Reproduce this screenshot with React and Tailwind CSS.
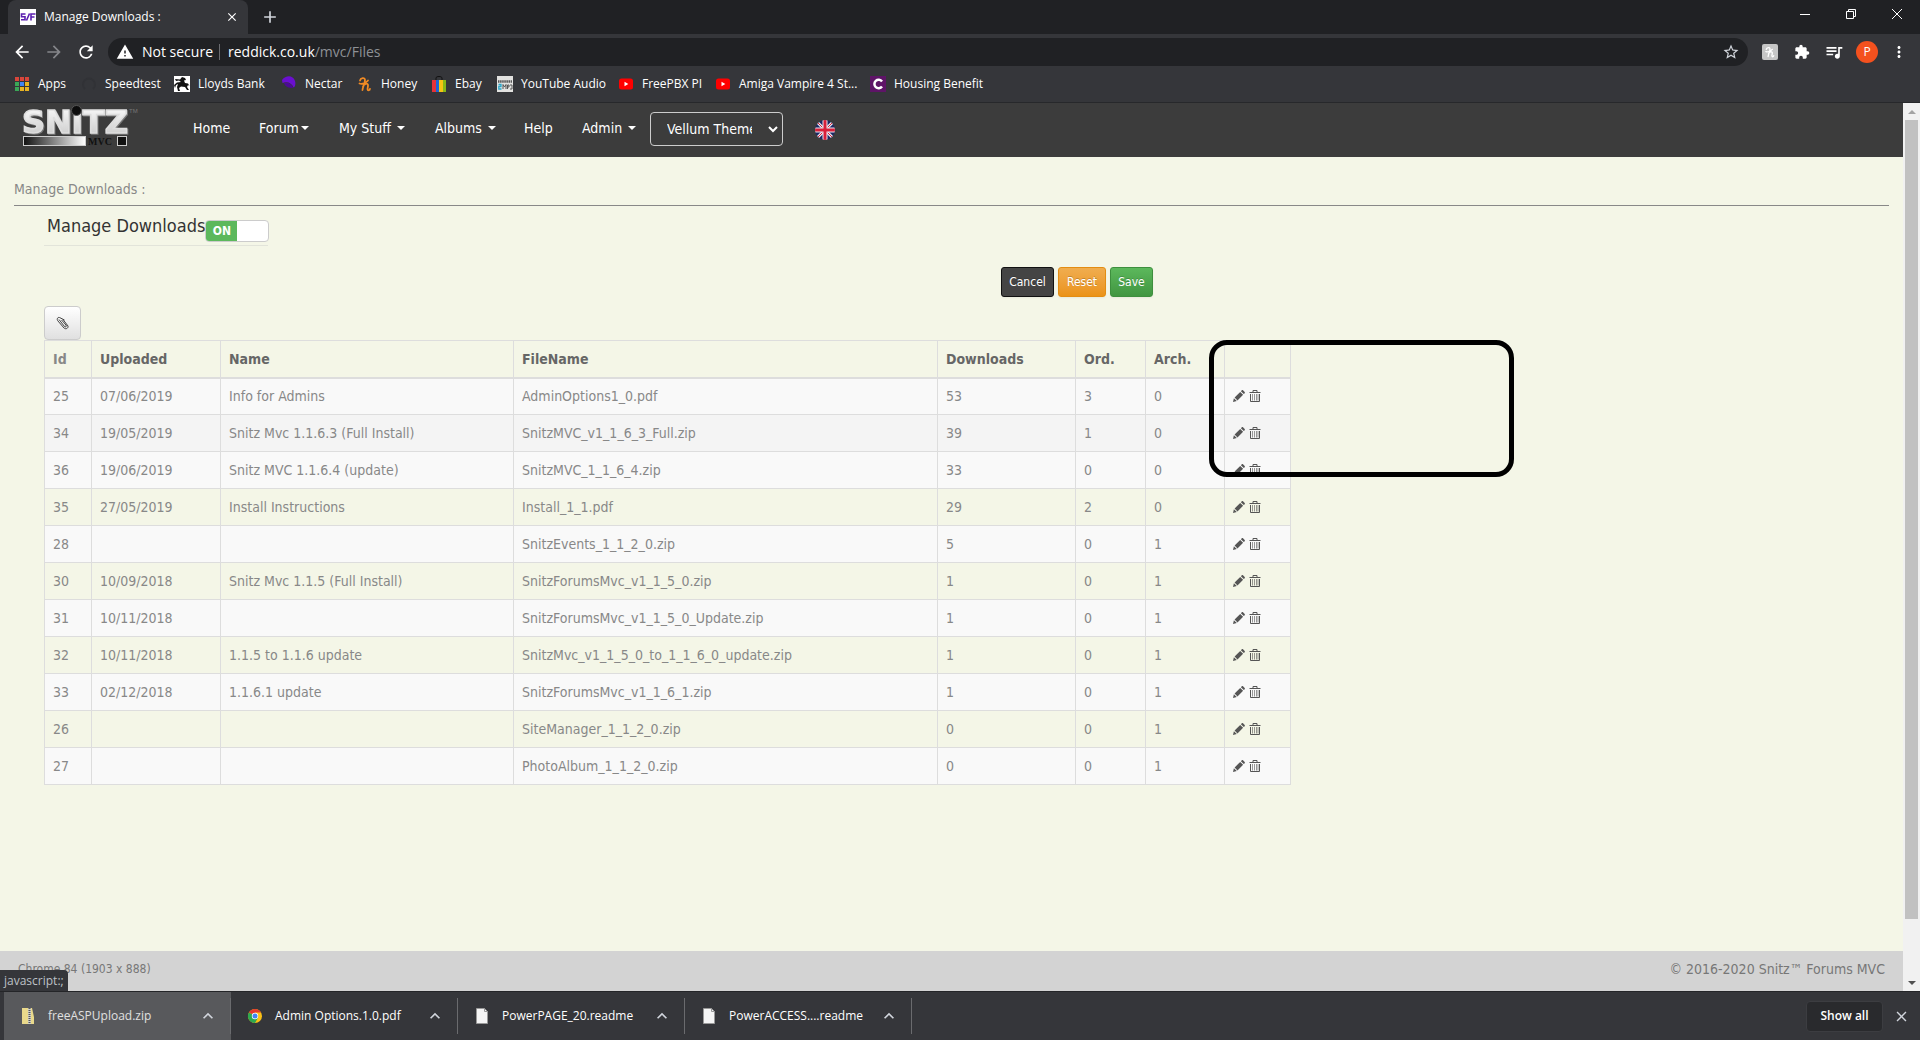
import {
  MdArrowBack, MdArrowForward, MdRefresh, MdStarBorder, MdExtension, MdQueueMusic, MdMoreVert,
  MdClose, MdAdd, MdWarning, MdKeyboardArrowUp,
} from "react-icons/md";

const files = [
  ["25", "07/06/2019", "Info for Admins", "AdminOptions1_0.pdf", "53", "3", "0", "bg-[#f9f9f9]"],
  ["34", "19/05/2019", "Snitz Mvc 1.1.6.3 (Full Install)", "SnitzMVC_v1_1_6_3_Full.zip", "39", "1", "0", "bg-[#f4f4f4]"],
  ["36", "19/06/2019", "Snitz MVC 1.1.6.4 (update)", "SnitzMVC_1_1_6_4.zip", "33", "0", "0", "bg-[#f9f9f9]"],
  ["35", "27/05/2019", "Install Instructions", "Install_1_1.pdf", "29", "2", "0", ""],
  ["28", "", "", "SnitzEvents_1_1_2_0.zip", "5", "0", "1", "bg-[#f9f9f9]"],
  ["30", "10/09/2018", "Snitz Mvc 1.1.5 (Full Install)", "SnitzForumsMvc_v1_1_5_0.zip", "1", "0", "1", ""],
  ["31", "10/11/2018", "", "SnitzForumsMvc_v1_1_5_0_Update.zip", "1", "0", "1", "bg-[#f9f9f9]"],
  ["32", "10/11/2018", "1.1.5 to 1.1.6 update", "SnitzMvc_v1_1_5_0_to_1_1_6_0_update.zip", "1", "0", "1", ""],
  ["33", "02/12/2018", "1.1.6.1 update", "SnitzForumsMvc_v1_1_6_1.zip", "1", "0", "1", "bg-[#f9f9f9]"],
  ["26", "", "", "SiteManager_1_1_2_0.zip", "0", "0", "1", ""],
  ["27", "", "", "PhotoAlbum_1_1_2_0.zip", "0", "0", "1", "bg-[#f9f9f9]"],
];

function TabStrip() {
  return (
    <div className="flex h-[34px] shrink-0 bg-[#202124] pl-2">
      <div className="flex w-60 items-center rounded-t-lg bg-[#35363a] pr-2 pl-3">
        <svg className="h-4 w-4 shrink-0" viewBox="0 0 16 16" aria-hidden="true">
          <rect width="16" height="16" fill="#fff" />
          <path d="M5.500 5H1.500V7.800H5V10.800H1M6.500 11.500L9.500 4.500M15.500 5H11V11.500M11 8H14.500" fill="none" stroke="#5b1fb0" strokeWidth="1.6" />
        </svg>
        <span className="ml-2 flex-1 text-white">Manage Downloads :</span>
        <button aria-label="Close tab" className="flex h-4 w-4 items-center justify-center text-white"><MdClose size={14} /></button>
      </div>
      <button aria-label="New tab" className="ml-3 text-gray-300"><MdAdd size={20} /></button>
      <div className="ml-auto flex text-white">
        <button aria-label="Minimize" className="flex h-7 w-[46px] items-center justify-center">
          <svg width="10" height="10"><path d="M0 5.5H10" stroke="currentColor" /></svg>
        </button>
        <button aria-label="Restore" className="flex h-7 w-[46px] items-center justify-center">
          <svg width="10" height="10"><path d="M.5 2.5H7.500V9.500H.5ZM2.500 2.500V.5H9.500V7.500H7.500" fill="none" stroke="currentColor" /></svg>
        </button>
        <button aria-label="Close" className="flex h-7 w-[46px] items-center justify-center">
          <svg width="10" height="10"><path d="M0 0L10 10M10 0L0 10" stroke="currentColor" /></svg>
        </button>
      </div>
    </div>
  );
}

function Toolbar() {
  return (
    <div className="flex h-9 shrink-0 items-center bg-[#35363a] pr-3 pl-3 text-sm text-white">
      <button aria-label="Back"><MdArrowBack size={20} /></button>
      <button aria-label="Forward" className="ml-3 text-[#85868a]"><MdArrowForward size={20} /></button>
      <button aria-label="Reload" className="ml-3"><MdRefresh size={20} /></button>
      <div className="ml-3 flex h-7 flex-1 items-center rounded-full bg-[#202124] pr-2 pl-2">
        <MdWarning size={18} />
        <span className="ml-2">Not secure</span>
        <span className="mr-2 ml-1.5 h-4 w-px bg-[#6b6c70]" />
        <span className="flex-1">reddick.co.uk<span className="text-[#8e9196]">/mvc/Files</span></span>
        <button aria-label="Bookmark this page" className="text-gray-300"><MdStarBorder size={18} /></button>
      </div>
      <button aria-label="Honey" className="ml-3.5 flex h-4 w-4 items-center justify-center rounded-xs bg-[#c6c6c6]">
        <HoneyMark className="h-3 w-3 text-white" />
      </button>
      <button aria-label="Extensions" className="ml-4"><MdExtension size={16} /></button>
      <button aria-label="Media" className="ml-3.5"><MdQueueMusic size={20} /></button>
      <button aria-label="Profile" className="ml-3 flex h-[22px] w-[22px] items-center justify-center rounded-full bg-[#f4511e] text-xs">P</button>
      <button aria-label="Menu" className="ml-3"><MdMoreVert size={18} /></button>
    </div>
  );
}

function HoneyMark({ className }) {
  return (
    <svg className={className} viewBox="0 0 16 16" aria-hidden="true">
      <path d="M3 4.500C3.500 2 8 1 8 4C8 7 6 10 5.500 14M6 10.500C7 8 10.500 6.500 11 9C11.300 11 9.500 14 11.500 14.300C12.500 14.300 13 13.500 13 12.800M2.500 7.500C5 8.500 9 7 11 4.500" fill="none" stroke="currentColor" strokeWidth="1.800" strokeLinecap="round" />
    </svg>
  );
}

function YouTubeMark() {
  return (
    <svg className="h-4 w-4" viewBox="0 0 16 16" aria-hidden="true">
      <rect x="1" y="2.500" width="14" height="11" rx="2.500" fill="#f00" />
      <path d="M6.500 5.800V10.200L10.300 8Z" fill="#fff" />
    </svg>
  );
}

const appColours = ["#d9463b", "#d9463b", "#d9463b", "#3aa757", "#4285f4", "#e8b322", "#3aa757", "#e8b322", "#e8b322"];

const bookmarks = [
  ["Apps", "w-[67px]", (
    <svg className="h-4 w-4" viewBox="0 0 16 16" aria-hidden="true">
      {appColours.map((c, i) => (
        <rect key={i} x={1 + (i % 3) * 5} y={1 + Math.floor(i / 3) * 5} width="4" height="4" fill={c} />
      ))}
    </svg>
  )],
  ["Speedtest", "w-[93px]", (
    <svg className="h-4 w-4" viewBox="0 0 16 16" aria-hidden="true">
      <path d="M4 13A6 6 0 1 1 12 13" fill="none" stroke="#313236" strokeWidth="2" />
    </svg>
  )],
  ["Lloyds Bank", "w-[107px]", (
    <svg className="h-4 w-4" viewBox="0 0 16 16" aria-hidden="true">
      <rect width="16" height="16" fill="#fff" />
      <path d="M8 1L11 2L12 4L10 4.500L11 7L14 7.500L15.500 10L14 9L13 11L15 14H13L11 11L7 10.500L5 12L6 15H4L3 11L4 8L2 9L1 12L0 9L3 6.500L7 6L5 4.500L2 5L1 3L6 3.500Z" fill="#111" />
    </svg>
  )],
  ["Nectar", "w-[76px]", (
    <svg className="h-4 w-4" viewBox="0 0 16 16" aria-hidden="true">
      <path d="M1 4C5 -1 12 -1 14 5C15 8 14 11 12.500 11.500C11 7 6 5 1.500 7Z" fill="#6a0fd0" />
      <path d="M3 7C7 6 11 8 12 12C8 12 4 11 3 7Z" fill="#4c0a96" />
    </svg>
  )],
  ["Honey", "w-[74px]", <HoneyMark className="h-4 w-4 text-[#f08a24]" />],
  ["Ebay", "w-[66px]", (
    <svg className="h-4 w-4" viewBox="0 0 16 16" aria-hidden="true">
      <path d="M5 4V2C5 0 11 0 11 2V4" fill="none" stroke="#111" />
      <path d="M1 4H5V16H1Z" fill="#e53238" />
      <path d="M5 4H8V16H5Z" fill="#1a66d6" />
      <path d="M8 4H12V16H8Z" fill="#f5c314" />
      <path d="M12 4H15V16H12Z" fill="#86b817" />
    </svg>
  )],
  ["YouTube Audio", "w-[121px]", (
    <svg className="h-4 w-4" viewBox="0 0 16 16" aria-hidden="true">
      <rect width="16" height="16" fill="#e2e2e0" />
      <path d="M1 5.500H15" stroke="#555" strokeWidth="2.500" strokeDasharray="1.500 .6" />
      <path d="M1.500 8.500H4V10.500H1.800V13H4.500" fill="none" stroke="#2aa5c8" strokeWidth="1.300" />
      <path d="M6 13V8.500L7.500 11L9 8.500V13M10.500 13V9H12V11H10.500M13 9H15V13H13" fill="none" stroke="#555" />
    </svg>
  )],
  ["FreePBX PI", "w-[97px]", <YouTubeMark />],
  ["Amiga Vampire 4 St...", "w-[155px]", <YouTubeMark />],
  ["Housing Benefit", "", (
    <svg className="h-4 w-4" viewBox="0 0 16 16" aria-hidden="true">
      <rect width="16" height="16" fill="#5e1467" />
      <path d="M12 5.500A4.200 4.200 0 1 0 12 10.500" fill="none" stroke="#fff" strokeWidth="2.500" />
    </svg>
  )],
];

function Bookmarks() {
  return (
    <nav aria-label="Bookmarks" className="flex h-[33px] shrink-0 items-center border-b border-[#27282b] bg-[#35363a] pb-1 pl-3.5 text-white">
      {bookmarks.map(([label, width, icon]) => (
        <a key={label} href="#" className={"flex shrink-0 items-center gap-2 whitespace-nowrap " + width}>
          {icon}
          {label}
        </a>
      ))}
    </nav>
  );
}

function SnitzLogo() {
  return (
    <svg className="h-[42px] w-[116px] overflow-visible" viewBox="0 0 116 42" role="img" aria-label="Snitz MVC">
      <defs>
        <linearGradient id="silver" x1="0" y1="0" x2="0" y2="1">
          <stop offset="0" stopColor="#fff" />
          <stop offset="1" stopColor="#c4c4c4" />
        </linearGradient>
        <linearGradient id="bar">
          <stop offset="0" stopColor="#111" />
          <stop offset="1" stopColor="#fff" />
        </linearGradient>
      </defs>
      <text x="-1" y="28" fontSize="32" fontWeight="700" fill="url(#silver)" stroke="#dedede" strokeWidth="1.600" className="font-['DejaVu_Sans'] drop-shadow-[1px_1px_0_#777]">SNiTZ</text>
      <circle cx="53.500" cy="5.500" r="5" fill="#0c0c0c" stroke="#555" />
      <text x="106" y="8" fontSize="6" fill="#777" className="font-['Liberation_Sans']">TM</text>
      <rect x=".5" y="31.500" width="62" height="9" fill="url(#bar)" stroke="#ccc" />
      <text x="65" y="40" fontSize="10" fontWeight="700" fill="#111" className="font-['Liberation_Serif']">MVC</text>
      <rect x="94.500" y="31.500" width="9" height="9" fill="#111" stroke="#ccc" />
    </svg>
  );
}

function Caret() {
  return <span className="h-0 w-0 border-x-4 border-t-4 border-x-transparent border-t-white" />;
}

function SiteNav() {
  return (
    <nav aria-label="Site" className="flex h-[54px] shrink-0 items-center bg-[#3c3c3c] pl-[23px] text-sm text-white">
      <a href="#" className="mb-2"><SnitzLogo /></a>
      <a href="#" className="ml-[54px] w-[66px] pb-1">Home</a>
      <a href="#" className="flex w-20 items-center gap-0.5 pb-1">Forum<Caret /></a>
      <a href="#" className="flex w-24 items-center gap-1.5 pb-1">My Stuff<Caret /></a>
      <a href="#" className="flex w-[89px] items-center gap-1.5 pb-1">Albums<Caret /></a>
      <a href="#" className="w-[58px] pb-1">Help</a>
      <a href="#" className="flex w-[68px] items-center gap-1.5 pb-1">Admin<Caret /></a>
      <div className="relative mb-0.5 flex items-center">
        <select aria-label="Theme" className="h-[34px] w-[133px] appearance-none overflow-hidden rounded border border-[#ccc] bg-transparent pr-[30px] pl-4 text-sm text-white">
          <option>Vellum Theme</option>
        </select>
        <svg className="pointer-events-none absolute right-[5px] h-2 w-2.5" viewBox="0 0 10 8" aria-hidden="true">
          <path d="M1 2L5 6L9 2" fill="none" stroke="#fff" strokeWidth="2" />
        </svg>
      </div>
      <button aria-label="English" className="ml-8">
        <svg className="h-5 w-5" viewBox="0 0 20 20">
          <clipPath id="disc"><circle cx="10" cy="10" r="10" /></clipPath>
          <g clipPath="url(#disc)">
            <rect width="20" height="20" fill="#1d2a66" />
            <path d="M0 0L20 20M20 0L0 20" stroke="#e8e8f0" strokeWidth="3" />
            <path d="M0 0L20 20M20 0L0 20" stroke="#d8203a" strokeWidth="1" />
            <path d="M10 0V20M0 10H20" stroke="#e8e8f0" strokeWidth="5" />
            <path d="M10 0V20M0 10H20" stroke="#d8203a" strokeWidth="3" />
          </g>
        </svg>
      </button>
    </nav>
  );
}

function RowActions() {
  return (
    <div className="flex gap-1 text-[#555]">
      <button aria-label="Edit">
        <svg className="h-3 w-3" viewBox="0 0 12 12">
          <path d="M0 12L.9 8.200L3.800 11.100ZM1.600 7.500L7.200 1.900L10.100 4.800L4.500 10.400ZM7.900 1.200L8.800 .3C9.200 0 9.600 0 10 .3L11.700 2C12 2.400 12 2.800 11.700 3.200L10.800 4.100Z" fill="currentColor" />
        </svg>
      </button>
      <button aria-label="Delete">
        <svg className="h-3 w-3" viewBox="0 0 12 12">
          <path d="M.5 2.500H11.500M4 2.500V.5H8V2.500M1.500 4V11.500H10.500V4" fill="none" stroke="currentColor" />
          <path d="M3.500 4V10.500M5.500 4V10.500M7.500 4V10.500M9 4V10.500" stroke="currentColor" strokeOpacity=".6" />
        </svg>
      </button>
    </div>
  );
}

function FilesTable() {
  const cell = "border border-[#ddd] px-2 ";
  return (
    <table className="w-full table-fixed border-collapse text-left text-sm text-[#888]">
      <colgroup>
        <col className="w-[47px]" />
        <col className="w-[129px]" />
        <col className="w-[293px]" />
        <col />
        <col className="w-[138px]" />
        <col className="w-[70px]" />
        <col className="w-[79px]" />
        <col className="w-[66px]" />
      </colgroup>
      <thead>
        <tr className="h-[37px] text-[#666]">
          {["Id", "Uploaded", "Name", "FileName", "Downloads", "Ord.", "Arch.", ""].map((h, i) => (
            <th key={i} scope="col" className={"border border-b-2 border-[#ddd] px-2 font-bold " + (i === 0 ? "text-[#888]" : "")}>{h}</th>
          ))}
        </tr>
      </thead>
      <tbody>
        {files.map((f) => (
          <tr key={f[0]} className={"h-[37px] " + f[7]}>
            {f.slice(0, 7).map((v, i) => <td key={i} className={cell}>{v}</td>)}
            <td className={cell}><RowActions /></td>
          </tr>
        ))}
      </tbody>
    </table>
  );
}

function ManageDownloads() {
  const btn = "h-[30px] rounded-[3px] border text-xs text-white shadow-xs [text-shadow:0_-1px_0_rgba(0,0,0,0.2)] ";
  return (
    <main className="flex-1 px-3.5 pt-[22px] text-[#888]">
      <h1 className="border-b border-[#888] pb-1.5 text-sm leading-5 text-[#888]">Manage Downloads :</h1>
      <div className="ml-[30px] max-w-[1247px]">
        <div className="flex h-10 w-[224px] items-start border-b border-[#e2e4da] pt-2 pl-[3px]">
          <label htmlFor="manage" className="text-lg leading-6 whitespace-nowrap text-[#333]">Manage Downloads</label>
          <div className="relative mt-1.5 flex h-[22px] w-16 shrink-0 overflow-hidden rounded border border-[#ccc] bg-white">
            <input id="manage" type="checkbox" role="switch" defaultChecked className="absolute inset-0 z-10 opacity-0" />
            <span className="flex w-1/2 items-center justify-center bg-[#5cb85c] text-xs font-bold text-white">ON</span>
          </div>
        </div>
        <div className="mt-[21px] flex justify-end gap-1 pr-[138px]">
          <button className={btn + "w-[53px] border-[#111] bg-[#444]"}>Cancel</button>
          <button className={btn + "w-12 border-[#e38d13] bg-linear-to-b from-[#f0ad4e] to-[#eb9316]"}>Reset</button>
          <button className={btn + "w-[43px] border-[#3e8f3e] bg-linear-to-b from-[#5cb85c] to-[#419641]"}>Save</button>
        </div>
        <button aria-label="Attach file" className="mt-[9px] flex h-[34px] w-[37px] items-center justify-center rounded border border-[#ccc] bg-linear-to-b from-white to-[#e0e0e0]">
          <svg className="h-3.5 w-3.5" viewBox="0 0 14 14" aria-hidden="true">
            <path d="M8.500 4L3.500 1.500C1.500 1 .5 3 1.800 4.800L8 12C9.500 13.500 12.500 12.500 12 10L7 3.500M3 3.500L8.500 10.500C9.500 11.500 11 10.500 10 9L5.500 4" fill="none" stroke="#444" />
          </svg>
        </button>
        <div className="relative">
          <FilesTable />
          <div className="pointer-events-none absolute top-0 left-[1165px] h-[137px] w-[305px] rounded-[18px] border-[5px] border-black" />
        </div>
      </div>
    </main>
  );
}

function DocIcon() {
  return (
    <svg className="h-4 w-4" viewBox="0 0 16 16" aria-hidden="true">
      <path d="M2.500 .5H10.500L13.500 3.500V15.500H2.500Z" fill="#f5f5f5" stroke="#999" />
      <path d="M10.500 .5V3.500H13.500" fill="none" stroke="#999" />
    </svg>
  );
}

const downloads = [
  ["freeASPUpload.zip", "bg-[#58595c] text-[#e0e0e0]", (
    <svg className="h-4 w-4" viewBox="0 0 16 16" aria-hidden="true">
      <path d="M2 0H12L14 9V16H2Z" fill="#e9d98b" />
      <path d="M8 0H11V16H8Z" fill="#d0d0c8" />
      <path d="M9.500 0V16" stroke="#555" strokeWidth="2" strokeDasharray="1 1" />
    </svg>
  )],
  ["Admin Options.1.0.pdf", "", (
    <svg className="h-4 w-4" viewBox="0 0 16 16" aria-hidden="true">
      <circle cx="8" cy="8" r="7" fill="#fbc116" />
      <path d="M8 8L1.900 4.500A7 7 0 0 1 14.100 4.500H8Z" fill="#e33b2e" />
      <path d="M1.900 4.500A7 7 0 0 0 8 15L11 9.700L8 8Z" fill="#2da94f" />
      <circle cx="8" cy="8" r="3.200" fill="#fff" />
      <circle cx="8" cy="8" r="2.500" fill="#4285f4" />
    </svg>
  )],
  ["PowerPAGE_20.readme", "", <DocIcon />],
  ["PowerACCESS....readme", "", <DocIcon />],
];

function DownloadShelf() {
  return (
    <div className="flex h-[49px] shrink-0 items-center border-t border-[#242528] bg-[#35363a] pl-1 text-white">
      {downloads.map(([name, bg, icon]) => (
        <div key={name} className={"flex h-full w-[227px] items-center " + bg}>
          <button className="flex flex-1 items-center gap-3 pb-px pl-4">
            {icon}
            {name}
          </button>
          <button aria-label={"Options for " + name} className="mr-3 text-gray-300"><MdKeyboardArrowUp size={20} /></button>
          <span className="h-9 w-px bg-[#6a6b6e]" />
        </div>
      ))}
      <button className="ml-auto h-[31px] w-[77px] rounded border border-[#3c3d41] bg-[#292a2d] font-semibold">Show all</button>
      <button aria-label="Close downloads bar" className="mr-2.5 ml-2.5 text-gray-300"><MdClose size={17} /></button>
    </div>
  );
}

export default function App() {
  return (
    <div className="flex min-h-screen flex-col font-['Open_Sans',sans-serif] text-xs">
      <TabStrip />
      <Toolbar />
      <Bookmarks />
      <div className="flex flex-1">
        <div className="relative flex min-w-0 flex-1 flex-col bg-[#f4f6e7] font-['DejaVu_Sans_Condensed','DejaVu_Sans',sans-serif]">
          <SiteNav />
          <ManageDownloads />
          <footer className="flex h-10 shrink-0 justify-between bg-[#d3d3d3] px-[18px] text-[#777]">
            <span className="pt-2 text-xs leading-5">Chrome 84 (1903 x 888)</span>
            <span className="pt-2 text-sm leading-5">© 2016-2020 Snitz™ Forums MVC</span>
          </footer>
          <div className="absolute bottom-0 left-0 rounded-tr bg-[#35363a] px-1 py-0.5 font-['Open_Sans',sans-serif] text-xs leading-[17px] text-[#bdc1c6]">javascript:;</div>
        </div>
        <div className="flex w-[17px] shrink-0 flex-col items-center bg-[#f1f1f1]">
          <div className="flex h-[17px] items-center"><span className="h-0 w-0 border-x-4 border-b-4 border-x-transparent border-b-[#a3a3a3]" /></div>
          <div className="w-[13px] grow-[800] bg-[#c1c1c1]" />
          <div className="grow-[55]" />
          <div className="flex h-[17px] items-center"><span className="h-0 w-0 border-x-4 border-t-4 border-x-transparent border-t-[#505050]" /></div>
        </div>
      </div>
      <DownloadShelf />
    </div>
  );
}
